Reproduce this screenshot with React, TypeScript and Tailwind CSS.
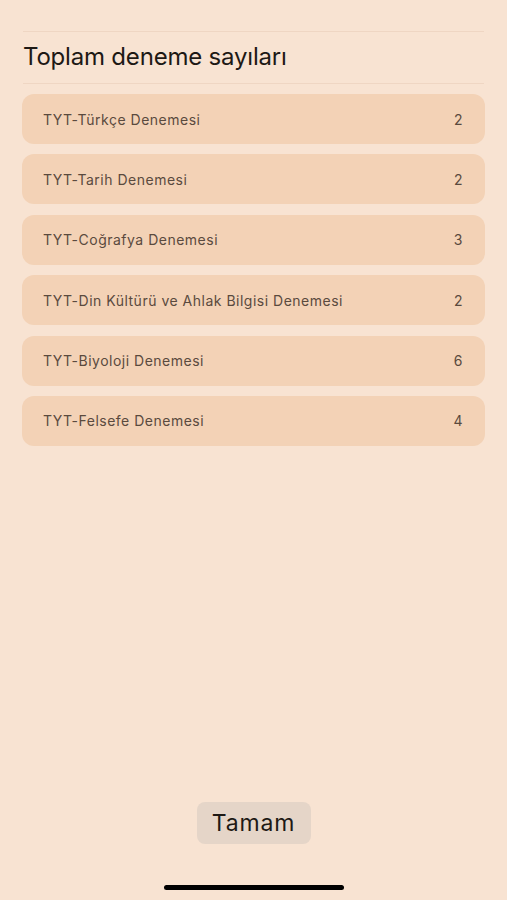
const rows = [
  { name: 'TYT-Türkçe Denemesi', count: 2 },
  { name: 'TYT-Tarih Denemesi', count: 2 },
  { name: 'TYT-Coğrafya Denemesi', count: 3 },
  { name: 'TYT-Din Kültürü ve Ahlak Bilgisi Denemesi', count: 2 },
  { name: 'TYT-Biyoloji Denemesi', count: 6 },
  { name: 'TYT-Felsefe Denemesi', count: 4 },
]

export default function App() {
  return (
    <div className="flex h-[900px] w-full flex-col bg-[#f8e3d2] font-['Inter',sans-serif]">
      <div className="px-[23px] pt-[31px]">
        <div className="h-px bg-[#efd6c3]" />
        <h1 className="pb-[10px] pt-[8px] text-[24px] leading-[33px] tracking-[-0.2px] text-[#1e1915]">
          Toplam deneme sayıları
        </h1>
        <div className="h-px bg-[#efd6c3]" />
      </div>

      <div className="mt-[10px] flex flex-col gap-[10.4px] px-[22px]">
        {rows.map((row) => (
          <div
            key={row.name}
            className="flex h-[50px] items-center justify-between rounded-[12px] bg-[#f3d2b6] pl-[21px] pr-[22px] text-[14px] tracking-[0.5px] text-[#5a4a3e]"
          >
            <span>{row.name}</span>
            <span>{row.count}</span>
          </div>
        ))}
      </div>

      <div className="flex-1" />

      <div className="flex justify-center">
        <button className="h-[42px] w-[114px] rounded-[8px] bg-[#e5d5c8] text-[23px] tracking-[0.8px] text-[#1e1915]">
          Tamam
        </button>
      </div>

      <div className="flex justify-center pb-[10px] pt-[41px]">
        <div className="h-[5px] w-[180px] rounded-full bg-black" />
      </div>
    </div>
  )
}
